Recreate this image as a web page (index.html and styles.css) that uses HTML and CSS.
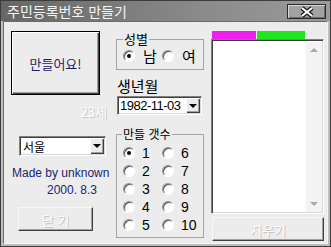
FILE: index.html
```html
<!DOCTYPE html>
<html lang="ko">
<head>
<meta charset="utf-8">
<link rel="stylesheet" href="styles.css">
</head>
<body>
<div class="window">
  <div class="titlebar">
    <span class="title">주민등록번호 만들기</span>
    <span class="close-btn">
      <svg width="16" height="12" viewBox="0 0 16 12"><path d="M3 2 L13 10 M13 2 L3 10" stroke="#111" stroke-width="4.5" fill="none"/><path d="M3 2 L13 10 M13 2 L3 10" stroke="#fff" stroke-width="2.2" fill="none"/></svg>
    </span>
  </div>
  <div class="client">
    <div class="col-left">
      <div class="btn make">만들어요!</div>
      <div class="age">23세</div>
      <div class="combo city"><span class="combo-text ko">서울</span><span class="combo-arrow"></span></div>
      <div class="credit">Made by unknown</div>
      <div class="credit date">2000. 8.3</div>
      <div class="btn disabled close">닫 기</div>
    </div>
    <div class="col-mid">
      <fieldset class="group gender">
        <legend>성별</legend>
        <div class="gender-row">
          <span class="opt"><span class="radio checked"></span><span class="opt-text ko">남</span></span>
          <span class="opt"><span class="radio"></span><span class="opt-text ko">여</span></span>
        </div>
      </fieldset>
      <div class="birth-label">생년월</div>
      <div class="combo date-combo"><span class="combo-text num">1982-11-03</span><span class="combo-arrow"></span></div>
      <fieldset class="group count">
        <legend>만들 갯수</legend>
        <div class="count-grid">
          <span class="opt"><span class="radio checked"></span><span class="opt-text">1</span></span>
          <span class="opt"><span class="radio"></span><span class="opt-text">6</span></span>
          <span class="opt"><span class="radio"></span><span class="opt-text">2</span></span>
          <span class="opt"><span class="radio"></span><span class="opt-text">7</span></span>
          <span class="opt"><span class="radio"></span><span class="opt-text">3</span></span>
          <span class="opt"><span class="radio"></span><span class="opt-text">8</span></span>
          <span class="opt"><span class="radio"></span><span class="opt-text">4</span></span>
          <span class="opt"><span class="radio"></span><span class="opt-text">9</span></span>
          <span class="opt"><span class="radio"></span><span class="opt-text">5</span></span>
          <span class="opt"><span class="radio"></span><span class="opt-text">10</span></span>
        </div>
      </fieldset>
    </div>
    <div class="col-right">
      <div class="bars"><span class="bar magenta"></span><span class="bar green"></span></div>
      <div class="listbox">
        <div class="list-body"></div>
        <div class="scrollbar"><span class="arr up"></span><span class="arr down"></span></div>
      </div>
      <div class="btn disabled clear">지우기</div>
    </div>
  </div>
</div>
</body>
</html>
```
FILE: styles.css
```css
html, body {
  margin: 0;
  padding: 0;
  background: #ececec;
}
body {
  font-family: "Noto Sans CJK KR", "Liberation Sans", sans-serif;
}
.window {
  width: 331px;
  height: 247px;
  box-sizing: border-box;
  border: 1px solid #3c3c3c;
  background: #bdbdbd;
  display: flex;
  flex-direction: column;
}
.titlebar {
  height: 20px;
  flex: none;
  display: flex;
  align-items: flex-start;
  padding-left: 6px;
  background: linear-gradient(to right, #666666, #8a8a8a 60%, #9a9a9a);
}
.title {
  color: #f4f4f4;
  font-size: 14px;
  line-height: 20px;
  font-family: "Noto Sans CJK KR", sans-serif;
}
.close-btn {
  margin-left: auto;
  margin-right: 4px;
  margin-top: 3px;
  width: 39px;
  height: 15px;
  box-sizing: border-box;
  border: 1px solid #2a2a2a;
  background: #a2a2a2;
  box-shadow: inset 1px 1px #d8d8d8, inset -1px -1px #6c6c6c;
  display: flex;
  align-items: center;
  justify-content: center;
}
.close-btn svg { display: block; }
.client {
  flex: 1;
  margin: 0 2px 2px 2px;
  border: 1px solid;
  border-color: #6a6a6a #f4f4f4 #f4f4f4 #6a6a6a;
  background: #ececec;
  display: grid;
  grid-template-columns: 105px 95px 114px;
  align-items: start;
  padding: 9px 0 0 7px;
}
.col-left, .col-mid, .col-right {
  display: flex;
  flex-direction: column;
  align-items: flex-start;
}
.btn {
  box-sizing: border-box;
  background: #ececec;
  display: flex;
  align-items: center;
  justify-content: center;
  border: 1px solid #f8f8f8;
  border-right-color: #404040;
  border-bottom-color: #404040;
  box-shadow: inset -1px -1px #a0a0a0;
  font-family: "Noto Sans CJK KR", sans-serif;
}
.make {
  width: 89px;
  height: 64px;
  border: 1px solid #000;
  box-shadow: inset 1px 1px #fff, inset -1px -1px #404040, inset -2px -2px #a0a0a0;
  font-size: 13px;
  color: #1c1c66;
}
.disabled {
  color: #fdfdfd;
  text-shadow: 1px 1px #c4c4c4;
  font-size: 13px;
}
.age {
  margin-top: 10px;
  width: 96px;
  height: 14px;
  line-height: 14px;
  text-align: right;
  font-size: 13px;
  color: #fdfdfd;
  text-shadow: 1px 1px #c8c8c8;
}
.combo {
  box-sizing: border-box;
  background: #fff;
  border: 1px solid;
  border-color: #808080 #fff #fff #808080;
  box-shadow: inset 1px 1px #404040, inset -1px -1px #d8d8d8;
  display: flex;
  align-items: stretch;
}
.combo-text {
  flex: 1;
  display: flex;
  align-items: center;
  color: #000;
}
.combo-text.ko {
  font-size: 12px;
  padding-left: 3px;
}
.combo-text.num {
  font-family: "Liberation Sans", sans-serif;
  font-size: 13px;
  letter-spacing: -0.5px;
  padding-left: 2px;
}
.combo-arrow {
  width: 14px;
  margin: 1px 1px 1px 0;
  box-sizing: border-box;
  background: #ececec;
  box-shadow: inset 1px 1px #fff, inset -1px -1px #404040, inset -2px -2px #a0a0a0;
  display: flex;
  align-items: center;
  justify-content: center;
}
.combo-arrow::after {
  content: "";
  border-top: 4px solid #000;
  border-left: 4px solid transparent;
  border-right: 4px solid transparent;
  margin-left: -1px;
}
.city {
  margin-top: 17px;
  margin-left: 8px;
  width: 87px;
  height: 20px;
}
.credit {
  margin-top: 10px;
  margin-left: 1px;
  font-family: "Liberation Sans", sans-serif;
  font-size: 12px;
  line-height: 14px;
  color: #1b2470;
}
.credit.date {
  margin-top: 3px;
  margin-left: 0;
  width: 86px;
  text-align: right;
}
.close {
  margin-top: 10px;
  margin-left: 7px;
  width: 75px;
  height: 24px;
}
.group {
  margin: 0;
  padding: 0 0 0 6px;
  border: 1px solid #a4a4a4;
  box-sizing: border-box;
  width: 88px;
  min-width: 0;
}
.group legend {
  padding: 0 1px;
  font-size: 13px;
  line-height: 12px;
  color: #000;
}
.count legend {
  font-size: 12px;
  margin-left: -1px;
}
.gender {
  margin-top: 2px;
  padding-bottom: 2px;
}
.gender-row {
  display: flex;
  height: 22px;
  align-items: center;
}
.opt {
  width: 39px;
  display: flex;
  align-items: center;
}
.radio {
  flex: none;
  width: 12px;
  height: 12px;
  box-sizing: border-box;
  border-radius: 50%;
  background: #fff;
  border: 1px solid;
  border-color: #909090 #fff #fff #909090;
  box-shadow: inset 1px 1px #555;
  display: flex;
  align-items: center;
  justify-content: center;
}
.radio.checked::after {
  content: "";
  width: 4px;
  height: 4px;
  border-radius: 50%;
  background: #000;
}
.opt-text {
  margin-left: 7px;
  font-family: "Liberation Sans", sans-serif;
  font-size: 14px;
  line-height: 18px;
  color: #000;
}
.opt-text.ko {
  font-family: "Noto Sans CJK KR", sans-serif;
  font-size: 15px;
  margin-left: 8px;
}
.birth-label {
  margin-top: 8px;
  margin-left: 1px;
  font-size: 15px;
  line-height: 16px;
  color: #000;
}
.date-combo {
  margin-top: 2px;
  margin-left: 1px;
  width: 85px;
  height: 19px;
}
.count {
  margin-top: 13px;
  padding-top: 4px;
  padding-bottom: 3px;
}
.count-grid {
  display: grid;
  grid-template-columns: 39px 39px;
  grid-auto-rows: 18px;
  align-items: center;
}
.bars {
  display: flex;
  gap: 1px;
  margin-left: 1px;
  height: 8px;
}
.bar { display: block; height: 8px; }
.magenta { width: 44px; background: #f01ff0; }
.green { width: 48px; background: #1fe61f; }
.listbox {
  width: 113px;
  height: 175px;
  box-sizing: border-box;
  border: 1px solid;
  border-color: #808080 #fff #fff #808080;
  box-shadow: inset 1px 1px #404040, inset -1px -1px #d8d8d8;
  background: #fff;
  display: flex;
  padding: 2px 1px 1px 2px;
}
.list-body {
  flex: 1;
  background: #fff;
}
.scrollbar {
  width: 16px;
  background: #f3f3f3;
  display: flex;
  flex-direction: column;
  justify-content: space-between;
  align-items: center;
  padding: 6px 0;
  box-sizing: border-box;
}
.arr {
  width: 0;
  height: 0;
  border-left: 4px solid transparent;
  border-right: 4px solid transparent;
}
.arr.up { border-bottom: 4px solid #a8a8a8; }
.arr.down { border-top: 4px solid #a8a8a8; }
.clear {
  margin-top: 3px;
  margin-left: 1px;
  width: 112px;
  height: 24px;
}
```
